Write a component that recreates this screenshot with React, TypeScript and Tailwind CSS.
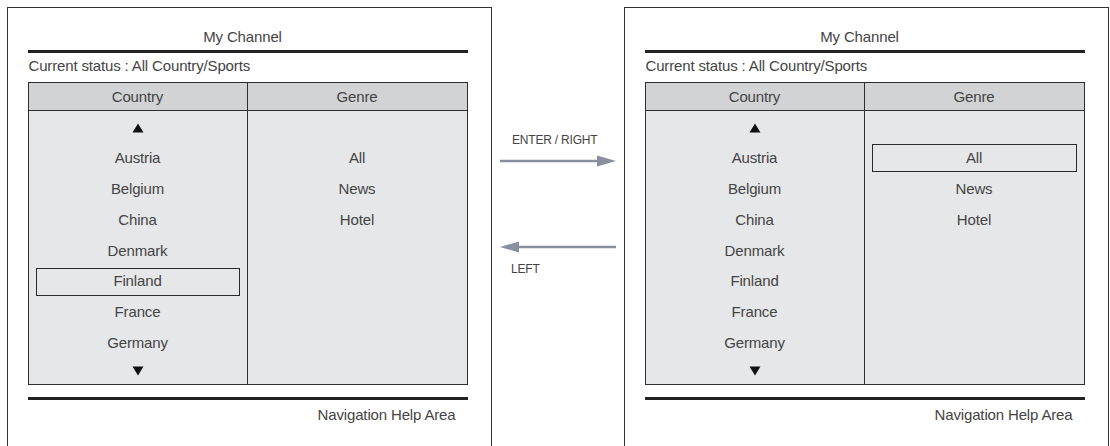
import React from 'react';

const countries = ['Austria', 'Belgium', 'China', 'Denmark', 'Finland', 'France', 'Germany'];
const genres = ['All', 'News', 'Hotel'];

const Triangle: React.FC<{ down?: boolean }> = ({ down }) => (
  <svg width="12" height="10" viewBox="0 0 12 10">
    <polygon points={down ? '0.5,0.5 11.5,0.5 6,9.5' : '0.5,9.5 11.5,9.5 6,0.5'} fill="#111" />
  </svg>
);

const Item: React.FC<{ label: string, selected: boolean }> = ({ label, selected }) => (
  <div className="h-[30.8px] flex items-center justify-center">
    {selected ? (
      <div className="h-[28px] w-full mx-[7px] border-[1.5px] border-[#2b2b2b] flex items-center justify-center">{label}</div>
    ) : (
      label
    )}
  </div>
);

const Arrow: React.FC<{ left?: boolean }> = ({ left }) => (
  <svg width="116" height="12" viewBox="0 0 116 12" className={left ? '-scale-x-100' : ''}>
    <line x1="0" y1="6" x2="100" y2="6" stroke="#8a8fa0" strokeWidth="2.5" />
    <polygon points="97,0.5 116,6 97,11.5" fill="#8a8fa0" />
  </svg>
);

const ChannelPanel: React.FC<{
  country: string | null,
  genre: string | null
}> = ({ country, genre }) => {
  return (
    <div className="w-[485px] h-[439px] border-[1.5px] border-b-0 border-[#333] pl-[19.5px] pr-[23.5px] flex flex-col text-[15px] text-[#444] tracking-[-0.15px]">
      <div className="mt-[19px] h-[20px] leading-[20px] text-center pr-[10px]">My Channel</div>
      <div className="mt-[3px] h-[3px] bg-[#222]" />
      <div className="mt-[3px] h-[20px] leading-[20px] pl-[1px]">Current status : All Country/Sports</div>

      <div className="mt-[5.5px] border-[1.5px] border-[#2e2e2e]">
        <div className="grid grid-cols-2 h-[28.5px] bg-[#d1d3d4] border-b-[1.5px] border-[#2e2e2e]">
          <div className="flex items-center justify-center border-r-[1.5px] border-[#2e2e2e] pt-[1px]">Country</div>
          <div className="flex items-center justify-center pt-[1px]">Genre</div>
        </div>
        <div className="grid grid-cols-2 h-[272.5px] bg-[#e6e7e8]">
          <div className="flex flex-col border-r-[1.5px] border-[#2e2e2e]">
            <div className="h-[32px] flex items-center justify-center pt-[2px]">
              <Triangle />
            </div>
            {countries.map((c) => (
              <Item key={c} label={c} selected={c === country} />
            ))}
            <div className="flex-1 flex items-center justify-center">
              <Triangle down />
            </div>
          </div>
          <div className="flex flex-col">
            <div className="h-[32px]" />
            {genres.map((g) => (
              <Item key={g} label={g} selected={g === genre} />
            ))}
          </div>
        </div>
      </div>

      <div className="mt-[12.5px] h-[3px] bg-[#222]" />
      <div className="mt-[5px] h-[20px] leading-[20px] text-right pr-[12px]">Navigation Help Area</div>
    </div>
  );
};

const App: React.FC = () => {
  return (
    <div className="w-[1110px] h-[446px] overflow-hidden bg-white pl-[7px] pt-[7px] flex font-['Liberation_Sans',Arial,sans-serif]">
      <ChannelPanel country="Finland" genre={null} />

      <div className="w-[132px] pl-[8px] flex flex-col text-[12px] leading-[14px] text-[#444] tracking-[-0.2px]">
        <div className="mt-[126px] pl-[12px]">ENTER / RIGHT</div>
        <div className="mt-[8px] h-[12px] flex">
          <Arrow />
        </div>
        <div className="mt-[74px] h-[12px] flex">
          <Arrow left />
        </div>
        <div className="mt-[9px] pl-[11px]">LEFT</div>
      </div>

      <ChannelPanel country={null} genre="All" />
    </div>
  );
};

export default App;
